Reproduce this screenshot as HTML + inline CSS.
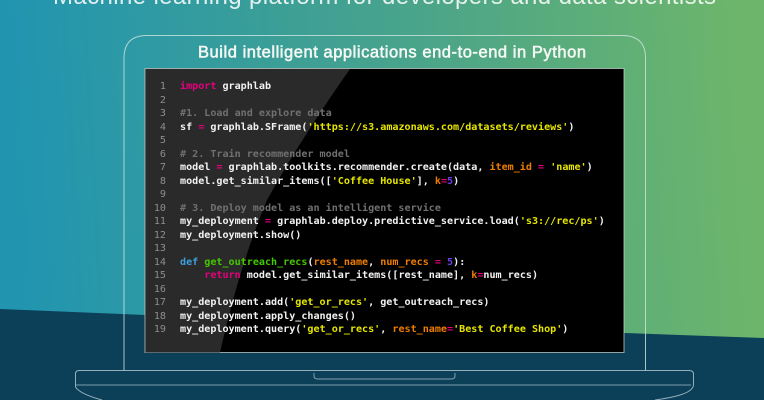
<!DOCTYPE html>
<html>
<head>
<meta charset="utf-8">
<style>
html,body{margin:0;padding:0;width:764px;height:400px;overflow:hidden;background:#0c3f58}
#wrap{position:relative;width:764px;height:400px;overflow:hidden}
svg{position:absolute;left:0;top:0}
#code{position:absolute;left:180px;top:80.4px;margin:0;font:bold 10.08px/13.5px "DejaVu Sans Mono","Liberation Mono",monospace;color:#f2f2f2;white-space:pre;filter:blur(.35px)}
#nums{position:absolute;left:146px;width:20px;top:80.4px;margin:0;text-align:right;font:10.08px/13.5px "DejaVu Sans Mono","Liberation Mono",monospace;color:#8e8e8e;white-space:pre;filter:blur(.35px)}
.k{color:#e5007d}.s{color:#e6e600}.o{color:#ee7d00}.g{color:#45c800}.b{color:#3f9fdc}.p{color:#6b3fe6}.c{color:#707070}
</style>
</head>
<body>
<div id="wrap">
<svg width="764" height="400" viewBox="0 0 764 400">
<defs>
<linearGradient id="bg" gradientUnits="userSpaceOnUse" x1="20" y1="170" x2="740" y2="130">
<stop offset="0" stop-color="#2195b0"/>
<stop offset=".5" stop-color="#45a28e"/>
<stop offset="1" stop-color="#6cb56b"/>
</linearGradient>
</defs>
<rect width="764" height="400" fill="url(#bg)"/>
<path d="M0 309 L145 315 L624 333 L764 338 V400 H0 Z" fill="#0c3f58"/>
<text x="53" y="4" font-family="Liberation Sans" font-size="24" fill="#fff" opacity=".85" textLength="663" lengthAdjust="spacing">Machine learning platform for developers and data scientists</text>
<text x="198" y="57.500" font-family="Liberation Sans" font-size="16.500" fill="#f4f8f4" stroke="#f4f8f4" stroke-width=".55" textLength="388" lengthAdjust="spacing">Build intelligent applications end-to-end in Python</text>
<path d="M124 370.500 V58 Q124 35.500 147 35.500 H622 Q645.500 35.500 645.500 58 V370.500" fill="none" stroke="#cfe6e0" stroke-opacity=".8" stroke-width="1"/>
<rect x="145" y="68.500" width="479" height="284" fill="#000" stroke="#c4d0cc" stroke-opacity=".75" stroke-width="1"/>
<path d="M145.500 69 H350 Q300 140 267 200 Q238 270 220 352.500 H145.500 Z" fill="#2a2a2a"/>
<path d="M79 370.500 H689 Q693.500 370.500 693.500 374 V385 Q693 391 680 395 Q670 398 655 400 M79 370.500 Q75.500 370.500 75.500 374 V387 Q80 394 102 400" fill="none" stroke="#b6ccd4" stroke-opacity=".8" stroke-width="1"/>
<path d="M76 385 H691" fill="none" stroke="#b6ccd4" stroke-opacity=".65" stroke-width="1"/>
<path d="M314 373 V376 Q314 379 318 379 H451 Q455 379 455 376 V373" fill="none" stroke="#b6ccd4" stroke-opacity=".7" stroke-width="1"/>
</svg>
<pre id="nums">1
2
3
4
5
6
7
8
9
10
11
12
13
14
15
16
17
18
19</pre>
<pre id="code"><span class="k">import</span> graphlab

<span class="c">#1. Load and explore data</span>
sf <span class="k">=</span> graphlab.SFrame(<span class="s">'https://s3.amazonaws.com/datasets/reviews'</span>)

<span class="c"># 2. Train recommender model</span>
model <span class="k">=</span> graphlab.toolkits.recommender.create(data, <span class="o">item_id</span> <span class="k">=</span> <span class="s">'name'</span>)
model.get_similar_items([<span class="s">'Coffee House'</span>], <span class="o">k</span><span class="k">=</span><span class="p">5</span>)

<span class="c"># 3. Deploy model as an intelligent service</span>
my_deployment <span class="k">=</span> graphlab.deploy.predictive_service.load(<span class="s">'s3://rec/ps'</span>)
my_deployment.show()

<span class="b">def</span> <span class="g">get_outreach_recs</span>(<span class="o">rest_name</span>, <span class="o">num_recs</span> <span class="k">=</span> <span class="p">5</span>):
    <span class="k">return</span> model.get_similar_items([rest_name], <span class="o">k</span><span class="k">=</span>num_recs)

my_deployment.add(<span class="s">'get_or_recs'</span>, get_outreach_recs)
my_deployment.apply_changes()
my_deployment.query(<span class="s">'get_or_recs'</span>, <span class="o">rest_name</span><span class="k">=</span><span class="s">'Best Coffee Shop'</span>)</pre>
</div>
</body>
</html>
